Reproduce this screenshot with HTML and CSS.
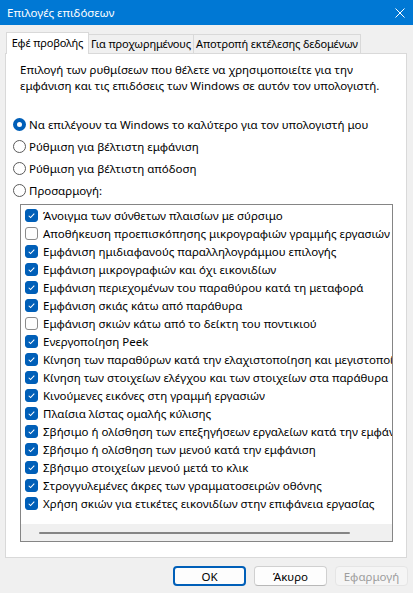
FILE: index.html
```html
<!DOCTYPE html>
<html lang="el">
<head>
<meta charset="utf-8">
<title>Επιλογές επιδόσεων</title>
<link rel="stylesheet" href="styles.css">
</head>
<body>
<div class="window">
  <div class="titlebar">
    <span class="title">Επιλογές επιδόσεων</span>
    <svg class="close" viewBox="0 0 10 10" width="10" height="10"><path d="M0.5 0.5 L9.5 9.5 M9.5 0.5 L0.5 9.5" stroke="#fff" stroke-width="1" fill="none"/></svg>
  </div>
  <div class="tabs">
    <div class="tab active t1">Εφέ προβολής</div>
    <div class="tab t2">Για προχωρημένους</div>
    <div class="tab t3">Αποτροπή εκτέλεσης δεδομένων</div>
  </div>
  <div class="panel">
    <p class="desc">Επιλογή των ρυθμίσεων που θέλετε να χρησιμοποιείτε για την<br>εμφάνιση και τις επιδόσεις των Windows σε αυτόν τον υπολογιστή.</p>
    <div class="radios">
      <div class="radio"><span class="rb on"></span><span>Να επιλέγουν τα Windows το καλύτερο για τον υπολογιστή μου</span></div>
      <div class="radio"><span class="rb"></span><span>Ρύθμιση για βέλτιστη εμφάνιση</span></div>
      <div class="radio"><span class="rb"></span><span>Ρύθμιση για βέλτιστη απόδοση</span></div>
      <div class="radio"><span class="rb"></span><span>Προσαρμογή:</span></div>
    </div>
    <div class="list">
      <div class="items">
        <div class="item"><span class="cb on"><svg viewBox="0 0 13 13"><path d="M3.2 6.8 L5.4 9 L9.8 4.3" /></svg></span><span>Άνοιγμα των σύνθετων πλαισίων με σύρσιμο</span></div>
        <div class="item"><span class="cb"></span><span>Αποθήκευση προεπισκόπησης μικρογραφιών γραμμής εργασιών</span></div>
        <div class="item"><span class="cb on"><svg viewBox="0 0 13 13"><path d="M3.2 6.8 L5.4 9 L9.8 4.3" /></svg></span><span>Εμφάνιση ημιδιαφανούς παραλληλογράμμου επιλογής</span></div>
        <div class="item"><span class="cb on"><svg viewBox="0 0 13 13"><path d="M3.2 6.8 L5.4 9 L9.8 4.3" /></svg></span><span>Εμφάνιση μικρογραφιών και όχι εικονιδίων</span></div>
        <div class="item"><span class="cb on"><svg viewBox="0 0 13 13"><path d="M3.2 6.8 L5.4 9 L9.8 4.3" /></svg></span><span>Εμφάνιση περιεχομένων του παραθύρου κατά τη μεταφορά</span></div>
        <div class="item"><span class="cb on"><svg viewBox="0 0 13 13"><path d="M3.2 6.8 L5.4 9 L9.8 4.3" /></svg></span><span>Εμφάνιση σκιάς κάτω από παράθυρα</span></div>
        <div class="item"><span class="cb"></span><span>Εμφάνιση σκιών κάτω από το δείκτη του ποντικιού</span></div>
        <div class="item"><span class="cb on"><svg viewBox="0 0 13 13"><path d="M3.2 6.8 L5.4 9 L9.8 4.3" /></svg></span><span>Ενεργοποίηση Peek</span></div>
        <div class="item"><span class="cb on"><svg viewBox="0 0 13 13"><path d="M3.2 6.8 L5.4 9 L9.8 4.3" /></svg></span><span>Κίνηση των παραθύρων κατά την ελαχιστοποίηση και μεγιστοποίηση</span></div>
        <div class="item"><span class="cb on"><svg viewBox="0 0 13 13"><path d="M3.2 6.8 L5.4 9 L9.8 4.3" /></svg></span><span>Κίνηση των στοιχείων ελέγχου και των στοιχείων στα παράθυρα</span></div>
        <div class="item"><span class="cb on"><svg viewBox="0 0 13 13"><path d="M3.2 6.8 L5.4 9 L9.8 4.3" /></svg></span><span>Κινούμενες εικόνες στη γραμμή εργασιών</span></div>
        <div class="item"><span class="cb on"><svg viewBox="0 0 13 13"><path d="M3.2 6.8 L5.4 9 L9.8 4.3" /></svg></span><span>Πλαίσια λίστας ομαλής κύλισης</span></div>
        <div class="item"><span class="cb on"><svg viewBox="0 0 13 13"><path d="M3.2 6.8 L5.4 9 L9.8 4.3" /></svg></span><span>Σβήσιμο ή ολίσθηση των επεξηγήσεων εργαλείων κατά την εμφάνιση</span></div>
        <div class="item"><span class="cb on"><svg viewBox="0 0 13 13"><path d="M3.2 6.8 L5.4 9 L9.8 4.3" /></svg></span><span>Σβήσιμο ή ολίσθηση των μενού κατά την εμφάνιση</span></div>
        <div class="item"><span class="cb on"><svg viewBox="0 0 13 13"><path d="M3.2 6.8 L5.4 9 L9.8 4.3" /></svg></span><span>Σβήσιμο στοιχείων μενού μετά το κλικ</span></div>
        <div class="item"><span class="cb on"><svg viewBox="0 0 13 13"><path d="M3.2 6.8 L5.4 9 L9.8 4.3" /></svg></span><span>Στρογγυλεμένες άκρες των γραμματοσειρών οθόνης</span></div>
        <div class="item"><span class="cb on"><svg viewBox="0 0 13 13"><path d="M3.2 6.8 L5.4 9 L9.8 4.3" /></svg></span><span>Χρήση σκιών για ετικέτες εικονιδίων στην επιφάνεια εργασίας</span></div>
      </div>
      <div class="hscroll"><div class="thumb"></div></div>
    </div>
  </div>
  <div class="buttons">
    <div class="btn default">OK</div>
    <div class="btn">Άκυρο</div>
    <div class="btn disabled">Εφαρμογή</div>
  </div>
</div>
</body>
</html>
```

FILE: styles.css
```css
html, body {
  margin: 0;
  padding: 0;
}
body {
  width: 413px;
  height: 593px;
  overflow: hidden;
  background: #f0f0f0;
  font-family: "Noto Sans", "Open Sans", sans-serif;
  font-size: 11.5px;
  color: #000;
}
.window {
  display: flex;
  flex-direction: column;
  height: 593px;
}
.titlebar {
  height: 25px;
  flex: none;
  background: #0078d4;
  color: #fff;
  display: flex;
  align-items: center;
  justify-content: space-between;
  padding: 0 8px 0 7px;
  font-size: 11.5px;
}
.close {
  display: block;
}
.tabs {
  display: flex;
  align-items: flex-end;
  height: 21px;
  margin: 7px 0 0 6px;
  position: relative;
  z-index: 1;
}
.tab {
  box-sizing: border-box;
  height: 19px;
  line-height: 17px;
  border: 1px solid #d9d9d9;
  border-bottom: none;
  background: #f0f0f0;
  white-space: nowrap;
  text-align: center;
  font-size: 11px;
  letter-spacing: -0.15px;
  margin-left: -1px;
}
.tab.active {
  height: 22px;
  line-height: 20px;
  margin-left: 0;
  margin-bottom: -1px;
  background: #fff;
  position: relative;
  z-index: 2;
}
.t1 { width: 83px; }
.t2 { width: 106px; }
.t3 { width: 168px; }
.panel {
  box-sizing: border-box;
  width: 402px;
  height: 505px;
  margin-left: 5px;
  background: #fff;
  border: 1px solid #d9d9d9;
  padding-top: 8px;
  display: flex;
  flex-direction: column;
}
.desc {
  margin: 0 0 0 14px;
  line-height: 16px;
}
.radios {
  margin: 19px 0 0 7px;
}
.radio {
  height: 22px;
  display: flex;
  align-items: center;
  gap: 3px;
}
.rb {
  box-sizing: border-box;
  width: 13px;
  height: 13px;
  border-radius: 50%;
  border: 1px solid #5a5a5a;
  background: #fff;
  flex: none;
}
.rb.on {
  border: 4px solid #005fb8;
  background: #fff;
}
.list {
  box-sizing: border-box;
  width: 373px;
  height: 338px;
  margin: 3px 0 0 14px;
  border: 1px solid #858585;
  display: flex;
  flex-direction: column;
  overflow: hidden;
}
.items {
  flex: 1;
  padding-top: 1px;
  overflow: hidden;
}
.item {
  height: 18px;
  display: flex;
  align-items: center;
  gap: 5px;
  padding-left: 4px;
  white-space: nowrap;
}
.cb {
  box-sizing: border-box;
  width: 13px;
  height: 13px;
  border-radius: 3px;
  border: 1px solid #8a8a8a;
  background: #fdfdfd;
  flex: none;
  display: flex;
}
.cb.on {
  background: #005fb8;
  border-color: #005fb8;
}
.cb svg {
  width: 11px;
  height: 11px;
}
.cb svg path {
  fill: none;
  stroke: #fff;
  stroke-width: 1.2;
}
.hscroll {
  flex: none;
  height: 17px;
  background: #f0f0f0;
  display: flex;
  align-items: center;
}
.thumb {
  margin-left: 18px;
  width: 311px;
  height: 2px;
  border-radius: 1px;
  background: #858585;
}
.buttons {
  display: flex;
  justify-content: flex-end;
  gap: 8px;
  padding-right: 5px;
  margin-top: 8px;
}
.btn {
  box-sizing: border-box;
  width: 73px;
  height: 20px;
  border: 1px solid #d0d0d0;
  border-bottom-color: #b8b8b8;
  border-radius: 4px;
  background: #fdfdfd;
  display: flex;
  align-items: center;
  justify-content: center;
  font-size: 11.5px;
}
.btn.default {
  border: 2px solid #005fb8;
}
.btn.disabled {
  color: #9d9d9d;
  background: #f5f5f5;
  border-color: #e5e5e5;
}
```
